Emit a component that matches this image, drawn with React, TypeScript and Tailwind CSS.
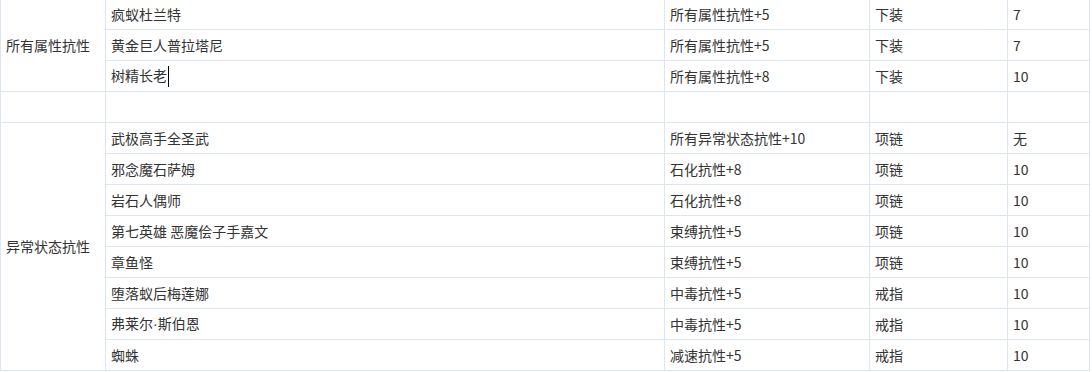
import React from "react";

type Row = { name: React.ReactNode; effect: string; slot: string; lv: string; caret?: boolean };

const group1: Row[] = [
  { name: "疯蚁杜兰特", effect: "所有属性抗性+5", slot: "下装", lv: "7" },
  { name: "黄金巨人普拉塔尼", effect: "所有属性抗性+5", slot: "下装", lv: "7" },
  { name: "树精长老", effect: "所有属性抗性+8", slot: "下装", lv: "10", caret: true },
];

const group2: Row[] = [
  { name: "武极高手全圣武", effect: "所有异常状态抗性+10", slot: "项链", lv: "无" },
  { name: "邪念魔石萨姆", effect: "石化抗性+8", slot: "项链", lv: "10" },
  { name: "岩石人偶师", effect: "石化抗性+8", slot: "项链", lv: "10" },
  { name: "第七英雄 恶魔侩子手嘉文", effect: "束缚抗性+5", slot: "项链", lv: "10" },
  { name: "章鱼怪", effect: "束缚抗性+5", slot: "项链", lv: "10" },
  { name: "堕落蚁后梅莲娜", effect: "中毒抗性+5", slot: "戒指", lv: "10" },
  {
    name: (
      <>
        弗莱尔<span style={{ fontFamily: '"Liberation Sans", sans-serif' }}>·</span>斯伯恩
      </>
    ),
    effect: "中毒抗性+5",
    slot: "戒指",
    lv: "10",
  },
  { name: "蜘蛛", effect: "减速抗性+5", slot: "戒指", lv: "10" },
];

const td = "border border-[#dde6f0] h-[31px] px-[5px] align-middle whitespace-nowrap";

function Cells({ r }: { r: Row }) {
  return (
    <>
      <td className={td}>
        {r.name}
        {r.caret && <span className="inline-block align-middle w-px h-[21px] bg-black ml-px" />}
      </td>
      <td className={td}>{r.effect}</td>
      <td className={td}>{r.slot}</td>
      <td className={td}>{r.lv}</td>
    </>
  );
}

export default function App() {
  return (
    <div
      className="bg-white text-[14px] text-[#333333] -mt-[2px]"
      style={{ fontFamily: '"Noto Sans CJK SC", "Liberation Sans", sans-serif' }}
    >
      <table className="table-fixed border-collapse w-[1089px]">
        <colgroup>
          <col className="w-[105px]" />
          <col className="w-[559px]" />
          <col className="w-[205px]" />
          <col className="w-[138px]" />
          <col className="w-[82px]" />
        </colgroup>
        <tbody>
          {group1.map((r, i) => (
            <tr key={"a" + i}>
              {i === 0 && (
                <td className={td} rowSpan={group1.length}>
                  所有属性抗性
                </td>
              )}
              <Cells r={r} />
            </tr>
          ))}
          <tr>
            <td className={td}></td>
            <td className={td}></td>
            <td className={td}></td>
            <td className={td}></td>
            <td className={td}></td>
          </tr>
          {group2.map((r, i) => (
            <tr key={"b" + i}>
              {i === 0 && (
                <td className={td} rowSpan={group2.length}>
                  异常状态抗性
                </td>
              )}
              <Cells r={r} />
            </tr>
          ))}
        </tbody>
      </table>
    </div>
  );
}
